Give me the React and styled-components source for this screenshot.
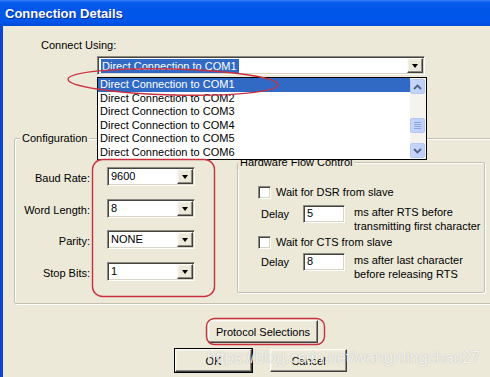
import React from 'react';
import styled, { createGlobalStyle, css } from 'styled-components';

const GlobalStyle = createGlobalStyle`
  html, body { margin: 0; padding: 0; background: #ECE9D8; }
  body { font-family: "Liberation Sans", Arial, sans-serif; font-size: 11px; color: #000; }
  * { box-sizing: border-box; }
`;

const sunken = css`
  border: 1px solid;
  border-color: #8a8880 #fdfdfb #fdfdfb #8a8880;
  box-shadow: inset 1px 1px 0 #45443f, inset -1px -1px 0 #d8d4c6;
  background: #fff;
`;

const raised = css`
  border: 1px solid;
  border-color: #fbfbf8 #404040 #404040 #fbfbf8;
  box-shadow: inset -1px -1px 0 #8d8b84, inset 1px 1px 0 #f1efe6;
  background: #ECE9D8;
`;

const etched = css`
  border: 1px solid #c3c0b1;
  box-shadow: 1px 1px 0 #fff, inset 1px 1px 0 #fff;
  border-radius: 2px;
`;

const Window = styled.div`
  width: 490px;
  height: 377px;
  overflow: hidden;
  display: flex;
  flex-direction: column;
  background: #ECE9D8;
`;

const TitleBar = styled.div`
  height: 26px;
  flex: none;
  display: flex;
  align-items: center;
  padding-left: 5px;
  background: linear-gradient(to bottom, #3b86f5 0px, #0b5ef0 2px, #0056e7 35%, #0057ea 80%, #004bd8 100%);
  color: #fff;
  font: bold 13px "Liberation Sans", Arial, sans-serif;
  text-shadow: 1px 1px 0 #0c2a99;
`;

const Body = styled.div`
  flex: 1;
  position: relative;
  border-left: 3px solid #0a46d6;
  display: flex;
  flex-direction: column;
  align-items: flex-start;
`;

const ConnectLabel = styled.div`
  margin: 13px 0 0 38px;
  line-height: 13px;
`;

const ComboBox = styled.div`
  ${sunken};
  width: ${p => p.$width}px;
  height: 19px;
  display: flex;
  align-items: stretch;
  padding: 1px;
  margin-left: ${p => p.$ml || 0}px;
  margin-top: ${p => p.$mt || 0}px;
`;

const ComboText = styled.div`
  flex: 1;
  line-height: 15px;
  padding-left: 2px;
  white-space: nowrap;
  overflow: hidden;
`;

const Selected = styled.span`
  display: inline-block;
  background: #316AC5;
  color: #fff;
  padding: 0 2px 0 1px;
  line-height: 14px;
  margin-top: 1px;
`;

const ArrowBtn = styled.div`
  ${raised};
  width: 16px;
  flex: none;
  display: flex;
  align-items: center;
  justify-content: center;
`;

const Arrow = styled.div`
  width: 0;
  height: 0;
  border-left: 3.5px solid transparent;
  border-right: 3.5px solid transparent;
  border-top: 4px solid #000;
  margin-top: 1px;
`;

const GroupBox = styled.div`
  ${etched};
  position: relative;
  flex: none;
  width: ${p => p.$width}px;
  height: ${p => p.$height}px;
  margin-left: ${p => p.$ml || 0}px;
  margin-top: ${p => p.$mt || 0}px;
`;

const Legend = styled.div`
  position: absolute;
  top: -7px;
  left: ${p => p.$left}px;
  padding: 0 2px;
  line-height: 13px;
  background: #ECE9D8;
  white-space: nowrap;
`;

const ConfigInner = styled.div`
  display: flex;
  align-items: flex-start;
  padding-top: 23px;
`;

const FieldGrid = styled.div`
  display: grid;
  grid-template-columns: 75px 88px;
  grid-auto-rows: 19px;
  column-gap: 17px;
  row-gap: 12.5px;
  margin-top: 5px;
`;

const FieldLabel = styled.div`
  text-align: right;
  padding-top: 3px;
  line-height: 16px;
  white-space: nowrap;
`;

const HWInner = styled.div`
  display: flex;
  flex-direction: column;
  padding: 23px 0 0 20px;
`;

const CheckRow = styled.div`
  display: flex;
  align-items: center;
  gap: 5px;
  height: 13px;
  line-height: 13px;
  margin-top: ${p => p.$mt || 0}px;
  white-space: nowrap;
`;

const CheckBox = styled.div`
  ${sunken};
  width: 13px;
  height: 13px;
  flex: none;
`;

const DelayRow = styled.div`
  display: flex;
  align-items: flex-start;
  padding-left: 3px;
  margin-top: ${p => p.$mt || 0}px;
`;

const DelayLabel = styled.div`
  width: 42px;
  line-height: 18px;
`;

const DelayInput = styled.div`
  ${sunken};
  width: 42px;
  height: 18px;
  line-height: 15px;
  padding-left: 3px;
`;

const DelayNote = styled.div`
  margin-left: 9px;
  line-height: 14px;
  white-space: nowrap;
`;

const Button = styled.div`
  ${raised};
  width: ${p => p.$width}px;
  height: 23px;
  display: flex;
  align-items: center;
  justify-content: center;
  ${p => p.$default && css`
    outline: 1px solid #000;
    outline-offset: 0;
  `}
`;

const ProtocolRow = styled.div`
  margin: 16px 0 0 205px;
`;

const ButtonRow = styled.div`
  display: flex;
  gap: 18px;
  margin: 6px 0 0 172px;
`;

/* ---- overlays ---- */

const DropList = styled.div`
  position: absolute;
  left: 94px;
  top: 51px;
  width: 330px;
  height: 83px;
  border: 1px solid #000;
  background: #fff;
  display: flex;
  z-index: 2;
`;

const Items = styled.div`
  flex: 1;
  display: flex;
  flex-direction: column;
`;

const Item = styled.div`
  height: 13.5px;
  line-height: 13.5px;
  padding-left: 2px;
  white-space: nowrap;
  background: ${p => (p.$active ? '#316AC5' : 'transparent')};
  color: ${p => (p.$active ? '#fff' : '#000')};
`;

const ScrollBar = styled.div`
  width: 16px;
  flex: none;
  display: flex;
  flex-direction: column;
  background: #f4f3ee;
  padding: 1px 1px 1px 0;
`;

const ScrollBtn = styled.div`
  height: 15px;
  flex: none;
  border: 1px solid #b5c7f3;
  border-radius: 2px;
  background: linear-gradient(to right, #c8d7fb, #bccefa);
  display: flex;
  align-items: center;
  justify-content: center;
  margin-top: ${p => p.$mt || 0}px;
`;

const Spacer = styled.div`
  flex: 1;
`;

const Grip = styled.div`
  width: 7px;
  height: 1px;
  background: #8ea5dc;
  box-shadow: 0 2px 0 #8ea5dc, 0 4px 0 #8ea5dc, 0 6px 0 #8ea5dc;
  margin-top: -6px;
`;

const Annotation = styled.svg`
  position: absolute;
  left: ${p => p.$x}px;
  top: ${p => p.$y}px;
  overflow: visible;
  pointer-events: none;
  z-index: 3;
`;

const Watermark = styled.div`
  position: absolute;
  left: 204px;
  top: 323px;
  font: 16px "Liberation Sans", Arial, sans-serif;
  line-height: 18px;
  color: rgba(250, 250, 250, 0.88);
  text-shadow: 0 0 1px rgba(115, 115, 115, 0.5);
  white-space: nowrap;
  pointer-events: none;
  z-index: 4;
`;

const Combo = ({ value, width, ml, mt, selected }) => (
  <ComboBox $width={width} $ml={ml} $mt={mt}>
    <ComboText>{selected ? <Selected>{value}</Selected> : value}</ComboText>
    <ArrowBtn>
      <Arrow />
    </ArrowBtn>
  </ComboBox>
);

const Chevron = ({ up }) => (
  <svg width="9" height="6" viewBox="0 0 9 6">
    <polyline
      points={up ? '1,5 4.5,1.5 8,5' : '1,1 4.5,4.5 8,1'}
      fill="none"
      stroke="#4d6185"
      strokeWidth="1.8"
    />
  </svg>
);

const fields = [
  ['Baud Rate:', '9600'],
  ['Word Length:', '8'],
  ['Parity:', 'NONE'],
  ['Stop Bits:', '1'],
];

const ports = ['COM1', 'COM2', 'COM3', 'COM4', 'COM5', 'COM6'];

export default function App() {
  return (
    <Window>
      <GlobalStyle />
      <TitleBar>Connection Details</TitleBar>
      <Body>
        <ConnectLabel>Connect Using:</ConnectLabel>
        <Combo value="Direct Connection to COM1" width={328} ml={94} mt={4} selected />

        <GroupBox $width={490} $height={166} $ml={11} $mt={63}>
          <Legend $left={5}>Configuration</Legend>
          <ConfigInner>
            <FieldGrid>
              {fields.map(([label, value]) => (
                <React.Fragment key={label}>
                  <FieldLabel>{label}</FieldLabel>
                  <Combo value={value} width={88} />
                </React.Fragment>
              ))}
            </FieldGrid>
            <GroupBox $width={248} $height={131} $ml={42}>
              <Legend $left={0}>Hardware Flow Control</Legend>
              <HWInner>
                <CheckRow>
                  <CheckBox />
                  Wait for DSR from slave
                </CheckRow>
                <DelayRow $mt={6}>
                  <DelayLabel>Delay</DelayLabel>
                  <DelayInput>5</DelayInput>
                  <DelayNote>
                    ms after RTS before
                    <br />
                    transmitting first character
                  </DelayNote>
                </DelayRow>
                <CheckRow $mt={3}>
                  <CheckBox />
                  Wait for CTS from slave
                </CheckRow>
                <DelayRow $mt={4}>
                  <DelayLabel>Delay</DelayLabel>
                  <DelayInput>8</DelayInput>
                  <DelayNote>
                    ms after last character
                    <br />
                    before releasing RTS
                  </DelayNote>
                </DelayRow>
              </HWInner>
            </GroupBox>
          </ConfigInner>
        </GroupBox>

        <ProtocolRow>
          <Button $width={110}>Protocol Selections</Button>
        </ProtocolRow>
        <ButtonRow>
          <Button $width={77} $default>OK</Button>
          <Button $width={77}>Cancel</Button>
        </ButtonRow>

        <DropList>
          <Items>
            {ports.map((p, i) => (
              <Item key={p} $active={i === 0}>Direct Connection to {p}</Item>
            ))}
          </Items>
          <ScrollBar>
            <ScrollBtn>
              <Chevron up />
            </ScrollBtn>
            <ScrollBtn $mt={24}>
              <Grip />
            </ScrollBtn>
            <Spacer />
            <ScrollBtn>
              <Chevron />
            </ScrollBtn>
          </ScrollBar>
        </DropList>

        <Annotation $x={62} $y={41} width="216" height="30">
          <ellipse cx="108" cy="15" rx="105" ry="13" fill="none" stroke="#c9303e" strokeWidth="1.4" transform="rotate(1.5 108 15)" />
        </Annotation>
        <Annotation $x={89} $y={133} width="123" height="138">
          <rect x="0.5" y="0.5" width="122" height="137" rx="10" fill="none" stroke="#c9303e" strokeWidth="1.4" />
        </Annotation>
        <Annotation $x={203} $y={292} width="119" height="27">
          <rect x="0.5" y="0.5" width="118" height="26" rx="8" fill="none" stroke="#c9303e" strokeWidth="1.4" />
        </Annotation>

        <Watermark>https://blog.csdn.net/wangmingchao27</Watermark>
      </Body>
    </Window>
  );
}
